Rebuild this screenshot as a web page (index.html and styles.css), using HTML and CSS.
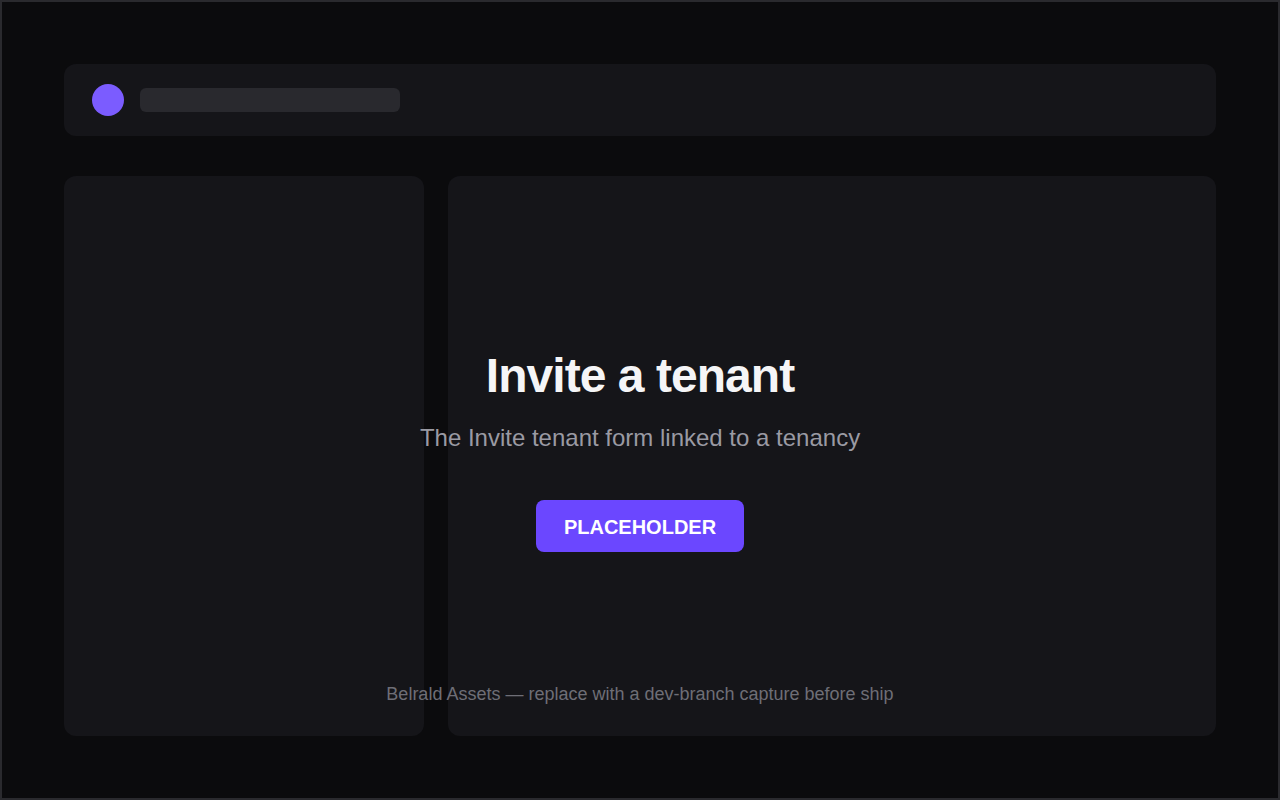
FILE: index.html
```html
<!DOCTYPE html>
<html lang="en">
<head>
<meta charset="utf-8">
<title>Invite a tenant</title>
<link rel="stylesheet" href="styles.css">
</head>
<body>
<div class="frame">
  <header class="topbar">
    <span class="avatar"></span>
    <span class="title-bar"></span>
  </header>
  <main class="layout">
    <aside class="panel side"></aside>
    <section class="panel content"></section>
  </main>
  <div class="overlay">
    <h1 class="heading">Invite a tenant</h1>
    <p class="subheading">The Invite tenant form linked to a tenancy</p>
    <button class="cta" type="button">PLACEHOLDER</button>
    <p class="note">Belrald Assets — replace with a dev-branch capture before ship</p>
  </div>
</div>
</body>
</html>
```

FILE: styles.css
```css
* { box-sizing: border-box; }
html, body { margin: 0; padding: 0; }
body {
  background: #0b0b0d;
  font-family: "Liberation Sans", Arial, sans-serif;
}
.frame {
  position: relative;
  width: 1280px;
  height: 800px;
  border: 2px solid #2a2a2e;
  background: #0b0b0d;
  padding: 62px;
  display: flex;
  flex-direction: column;
  gap: 40px;
}
.topbar {
  height: 72px;
  flex: none;
  background: #151519;
  border-radius: 12px;
  display: flex;
  align-items: center;
  gap: 16px;
  padding: 0 28px;
}
.avatar {
  width: 32px;
  height: 32px;
  border-radius: 50%;
  background: #7b5cff;
}
.title-bar {
  width: 260px;
  height: 24px;
  border-radius: 6px;
  background: #29292e;
}
.layout {
  height: 560px;
  flex: none;
  display: grid;
  grid-template-columns: 360px 1fr;
  gap: 24px;
}
.panel {
  background: #151519;
  border-radius: 12px;
}
.overlay {
  position: absolute;
  inset: 0;
  display: flex;
  flex-direction: column;
  align-items: center;
  padding-top: 346px;
  padding-bottom: 92px;
}
.heading {
  margin: 0;
  font-size: 48px;
  line-height: 56px;
  font-weight: 700;
  letter-spacing: -0.96px;
  color: #f5f5f7;
}
.subheading {
  margin: 18px 0 0;
  font-size: 24px;
  line-height: 32px;
  color: #9a9aa3;
}
.cta {
  margin-top: 46px;
  border: 0;
  border-radius: 8px;
  background: #6b47ff;
  color: #ffffff;
  font-family: "Liberation Sans", Arial, sans-serif;
  font-size: 20px;
  line-height: 24px;
  font-weight: 700;
  padding: 15px 28px 13px;
  cursor: pointer;
}
.note {
  margin: auto 0 0;
  font-size: 18px;
  line-height: 24px;
  color: #6e6e76;
}
```
